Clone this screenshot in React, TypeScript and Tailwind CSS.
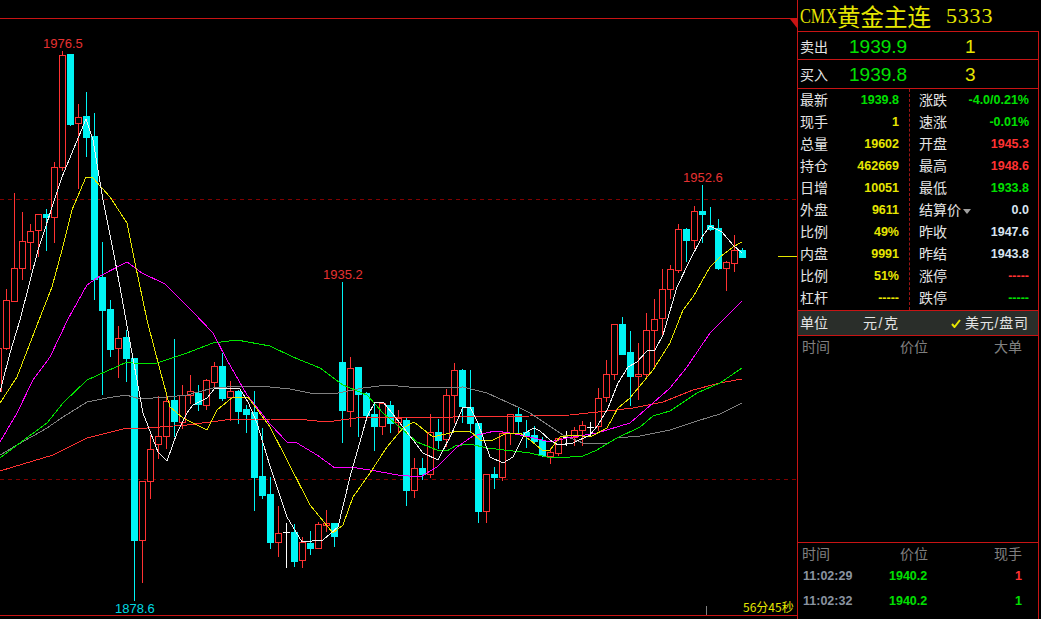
const UP = "#ff3232";
const DN = "#00f4f4";

// [centre x, kind, body top, body bottom, wick top, wick bottom]  kind: 0 up, 1 down, 2 doji
const C: [number, number, number, number, number, number][] = [
  [-2,0,348,391,340,400],[6,0,300,348,289,350],[14,0,268,301,193,302],[22,0,241,268,212,280],[30,0,231,242,224,270],
  [38,0,214,230,214,257],[46,1,214,217,209,251],[54,0,167,217,162,243],[62,0,55,167,51,171],[70,1,54,124,54,126],
  [78,0,117,123,104,189],[86,1,116,137,92,157],[94,1,136,279,113,300],[102,1,277,310,242,395],[110,1,309,349,300,357],
  [118,0,338,348,326,378],[126,1,337,358,330,382],[134,1,358,540,358,601],[142,0,481,540,481,583],[150,0,449,481,435,499],
  [158,0,436,444,396,459],[166,0,401,436,396,449],[174,1,400,421,339,437],[182,0,395,422,385,429],[190,0,391,395,375,404],
  [198,1,393,404,385,411],[206,0,380,405,379,410],[214,0,366,382,362,387],[222,1,366,398,353,401],[230,0,391,397,381,421],
  [238,1,391,411,390,424],[246,1,409,414,405,433],[254,1,412,477,391,511],[262,1,476,495,428,499],[270,1,494,542,477,549],
  [278,0,533,542,506,557],[286,2,532,532,523,568],[294,1,532,561,524,567],[302,0,542,560,537,568],[310,1,543,548,531,555],
  [318,0,524,548,522,548],[326,0,523,525,510,532],[334,1,523,536,523,547],[342,1,362,410,282,443],[350,0,368,411,357,427],
  [358,1,367,394,367,437],[366,1,393,415,392,421],[374,1,414,426,402,451],[382,0,403,426,402,435],[390,1,405,423,401,433],
  [398,0,418,422,410,433],[406,1,420,490,418,506],[414,0,468,490,458,498],[422,1,468,474,458,480],[430,0,432,474,414,478],
  [438,1,432,440,419,449],[446,0,395,439,389,447],[454,0,370,395,363,423],[462,1,370,406,369,423],[470,1,407,423,370,433],
  [478,1,423,511,423,523],[486,0,474,511,474,523],[494,1,474,477,467,489],[502,0,433,477,432,481],[510,0,414,433,414,445],
  [518,1,414,421,407,433],[526,1,432,436,420,448],[534,1,435,441,426,443],[542,1,440,455,437,457],[550,0,452,456,448,464],
  [558,0,438,453,438,456],[566,2,437,437,431,446],[574,0,430,437,427,446],[582,0,425,430,421,446],[590,2,427,427,422,436],
  [598,0,398,426,388,431],[606,0,374,397,360,402],[614,0,324,374,324,380],[622,1,324,354,317,355],[630,1,352,376,331,406],
  [638,0,374,376,343,400],[646,0,330,374,313,379],[654,0,319,330,299,369],[662,0,289,318,269,337],[670,0,269,289,265,299],
  [678,0,229,270,224,273],[686,1,229,240,228,262],[694,0,211,240,206,249],[702,1,211,214,185,243],[710,1,225,229,207,231],
  [718,1,228,268,219,270],[726,0,262,268,261,291],[734,0,250,263,235,272],[742,1,250,257,248,258],
];

const LINES: { color: string; pts: string }[] = [
  { color: "#ff3232", pts: "0,471 23,464 53,455 87,438 123,429 147,428 187,425 233,419 270,419 307,420 327,422 363,417 403,417 453,417 530,416 570,415 607,411 633,408 663,402 693,390 720,383 742,379" },
  { color: "#808080", pts: "0,455 17,445 47,428 63,417 87,402 107,398 126,395 140,399 167,397 187,395 213,388 242,386 270,387 290,389 310,393 333,394 363,388 387,385 420,388 463,387 487,393 520,408 530,413 563,435 583,443 607,444 617,438 640,436 670,430 697,421 720,414 742,403" },
  { color: "#00e600", pts: "0,458 17,445 47,423 63,403 87,380 127,362 140,364 157,363 187,353 213,343 237,340 270,346 293,357 320,368 343,385 367,395 383,413 403,430 417,442 437,450 447,451 455,446 470,444 487,448 513,451 530,453 547,457 557,458 583,456 597,450 617,438 640,427 653,416 670,411 697,393 720,383 742,368" },
  { color: "#ff00ff", pts: "0,442 17,413 33,380 50,357 68,319 87,285 100,276 127,262 142,273 165,284 193,312 213,333 227,360 247,395 270,424 287,442 297,443 317,455 335,468 350,467 370,470 398,475 420,477 437,467 457,447 473,436 495,431 510,433 530,437 550,442 567,438 597,433 630,423 653,403 670,388 687,367 710,333 730,313 742,301" },
  { color: "#e6e600", pts: "0,403 17,377 39,320 52,287 62,250 72,210 86,177 93,178 110,197 127,223 135,263 147,320 160,370 170,407 183,418 207,430 217,410 233,397 248,397 270,427 287,460 310,505 333,533 343,525 353,497 370,473 387,447 403,428 414,422 433,437 450,433 457,431 470,431 480,440 493,440 507,433 520,433 530,440 542,450 550,450 560,437 573,435 590,437 607,428 618,408 630,398 653,370 670,343 683,310 693,297 710,267 720,257 733,247 742,242" },
  { color: "#f0f0f0", pts: "0,392 10,353 20,320 38,250 62,177 86,119 93,140 103,200 115,260 126,320 132,353 143,413 158,452 167,461 177,433 187,413 193,405 207,398 215,388 227,388 240,389 248,402 257,423 270,466 287,517 302,542 323,540 338,527 350,477 367,417 375,402 383,402 392,413 403,427 423,453 438,460 452,433 463,407 470,407 478,423 490,457 503,463 513,457 525,433 534,428 540,431 550,440 558,445 573,443 590,435 598,425 608,408 618,383 628,367 637,362 647,351 655,350 663,335 677,287 690,260 702,237 710,226 722,232 733,245 742,253" },
];

function Chart() {
  return (
    <svg width="797" height="619" viewBox="0 0 797 619" className="block shrink-0">
      <line x1="0" y1="18.5" x2="797" y2="18.5" stroke="#c81414" />
      <polygon points="790,19 797,19 797,28" fill="#c81414" />
      <line x1="0" y1="615.5" x2="797" y2="615.5" stroke="#c81414" />
      <line x1="0" y1="199.5" x2="797" y2="199.5" stroke="#800000" strokeDasharray="4 4" />
      <line x1="0" y1="479.5" x2="797" y2="479.5" stroke="#800000" strokeDasharray="4 4" />
      <line x1="778" y1="256.5" x2="797" y2="256.5" stroke="#e6e600" />
      <line x1="706.5" y1="606" x2="706.5" y2="615" stroke="#808080" />
      <g shapeRendering="crispEdges">
        {C.map(([x, k, t, b, h, l]) => {
          const col = k === 0 ? UP : k === 1 ? DN : "#ffffff";
          return (
            <g key={x}>
              <rect x={x} y={h} width="1" height={l - h} fill={col} />
              {k === 0 && <rect x={x - 2.5} y={t + 0.5} width="6" height={b - t} fill="#000" stroke={col} />}
              {k === 1 && <rect x={x - 3} y={t} width="7" height={b - t + 1} fill={col} />}
              {k === 2 && <rect x={x - 3} y={t} width="7" height="1" fill={col} />}
            </g>
          );
        })}
        {LINES.map((l) => (
          <polyline key={l.color} points={l.pts} fill="none" stroke={l.color} strokeWidth="1" />
        ))}
      </g>
      <g className="font-['Liberation_Sans',sans-serif] text-[13px]">
        <text x="43" y="48" fill="#e63232">1976.5</text>
        <text x="323" y="279" fill="#e63232">1935.2</text>
        <text x="683" y="182" fill="#e63232">1952.6</text>
        <text x="115" y="613" fill="#00d8e0">1878.6</text>
      </g>
      <text x="743" y="612" fill="#e6e600" className="font-['Noto_Sans_CJK_SC',sans-serif] text-[12px]">56分45秒</text>
    </svg>
  );
}

const G = "text-[#00e000]";
const Y = "text-[#e6e600]";
const R = "text-[#ff3232]";
const W = "text-[#d8e4f0]";

const LEFT: [string, string, string][] = [
  ["最新", "1939.8", G],["现手", "1", Y],["总量", "19602", Y],["持仓", "462669", Y],["日增", "10051", Y],
  ["外盘", "9611", Y],["比例", "49%", Y],["内盘", "9991", Y],["比例", "51%", Y],["杠杆", "-----", Y],
];
const RIGHT: [string, string, string][] = [
  ["涨跌", "-4.0/0.21%", G],["速涨", "-0.01%", G],["开盘", "1945.3", R],["最高", "1948.6", R],["最低", "1933.8", G],
  ["结算价", "0.0", W],["昨收", "1947.6", W],["昨结", "1943.8", W],["涨停", "-----", R],["跌停", "-----", G],
];

function Cell({ label, value, color }: { label: string; value: string; color: string }) {
  return (
    <div className="flex h-[22px] items-center justify-between">
      <span className="flex items-center text-[14px] text-[#e4e4e4]">
        {label}
        {label === "结算价" && <span className="ml-[2px] mt-[3px] h-0 w-0 border-x-[4px] border-t-[5px] border-x-transparent border-t-[#a0a0a0]" />}
      </span>
      <span className={`text-[12.5px] font-bold ${color}`}>{value}</span>
    </div>
  );
}

function Quote({ label, price, qty, h }: { label: string; price: string; qty: string; h: string }) {
  return (
    <div className={`flex items-center pl-[2px] ${h}`}>
      <span className="w-[49px] text-[14px] text-[#e4e4e4]">{label}</span>
      <span className="w-[116px] text-[19px] text-[#00e000]">{price}</span>
      <span className="text-[19px] text-[#e6e600]">{qty}</span>
    </div>
  );
}

function Tape({ cols, h }: { cols: string[]; h: string }) {
  return (
    <div className={`flex items-center text-[14px] text-[#808080] ${h}`}>
      <span className="ml-[4px] w-[98px]">{cols[0]}</span>
      <span className="w-[94px]">{cols[1]}</span>
      <span>{cols[2]}</span>
    </div>
  );
}

function Trade({ t, p, q, c }: { t: string; p: string; q: string; c: string }) {
  return (
    <div className="flex h-[25px] items-center text-[12.5px] font-bold">
      <span className="ml-[5px] w-[86px] text-[#8a94a0]">{t}</span>
      <span className="w-[80px] text-[#00e000]">{p}</span>
      <span className={`w-[53px] text-right ${c}`}>{q}</span>
    </div>
  );
}

export default function App() {
  return (
    <div className="flex h-[619px] w-[1041px] overflow-hidden bg-black font-['Liberation_Sans','Noto_Sans_CJK_SC',sans-serif]">
      <Chart />
      <div className="flex h-full w-[244px] flex-col border-l border-[#c81414]">
        <div className="flex h-[31px] items-center pl-[2px] text-[#e6e600]">
          <span className="inline-block w-[37px] origin-left scale-x-[0.74] font-['Liberation_Serif',serif] text-[22px] leading-[28px]">CMX</span>
          <span className="font-['Noto_Sans_CJK_SC',sans-serif] text-[23.5px] leading-[28px]">黄金主连</span>
          <span className="ml-[15px] font-['Liberation_Serif',serif] text-[22px] leading-[28px] tracking-[0.8px]">5333</span>
        </div>
        <div className="mr-[2px] flex flex-1 flex-col border-r border-t border-[#c81414]">
          <Quote label="卖出" price="1939.9" qty="1" h="h-[27px] pt-[3px]" />
          <div className="border-y border-[#c81414]">
            <Quote label="买入" price="1939.8" qty="3" h="h-[28px] pt-[2px]" />
          </div>
          <div className="flex h-[221px]">
            <div className="w-[112px] border-r border-dashed border-[#a01414] pl-[2px] pr-[10px]">
              {LEFT.map((r, i) => (
                <Cell key={i} label={r[0]} value={r[1]} color={r[2]} />
              ))}
            </div>
            <div className="w-[119px] pl-[9px]">
              {RIGHT.map((r, i) => (
                <Cell key={i} label={r[0]} value={r[1]} color={r[2]} />
              ))}
            </div>
          </div>
          <div className="flex h-[26px] items-center border-y border-[#c81414] bg-[#2a2e2a] pl-[2px] text-[14px] text-[#e4e4e4]">
            <span className="w-[63px]">单位</span>
            <span className="w-[88px] tracking-[1.5px]">元/克</span>
            <svg width="10" height="9" viewBox="0 0 10 9" className="shrink-0">
              <path d="M1 5 L3.5 8 L9 1" fill="none" stroke="#e6e600" strokeWidth="2" />
            </svg>
            <span className="ml-[4px] tracking-[0.8px]">美元/盘司</span>
          </div>
          <Tape cols={["时间", "价位", "大单"]} h="h-[23px]" />
          <div className="flex-1" />
          <div className="h-[77px] border-t border-[#c81414]">
            <Tape cols={["时间", "价位", "现手"]} h="h-[21px] pt-[2px]" />
            <Trade t="11:02:29" p="1940.2" q="1" c={R} />
            <Trade t="11:02:32" p="1940.2" q="1" c={G} />
          </div>
        </div>
      </div>
    </div>
  );
}
